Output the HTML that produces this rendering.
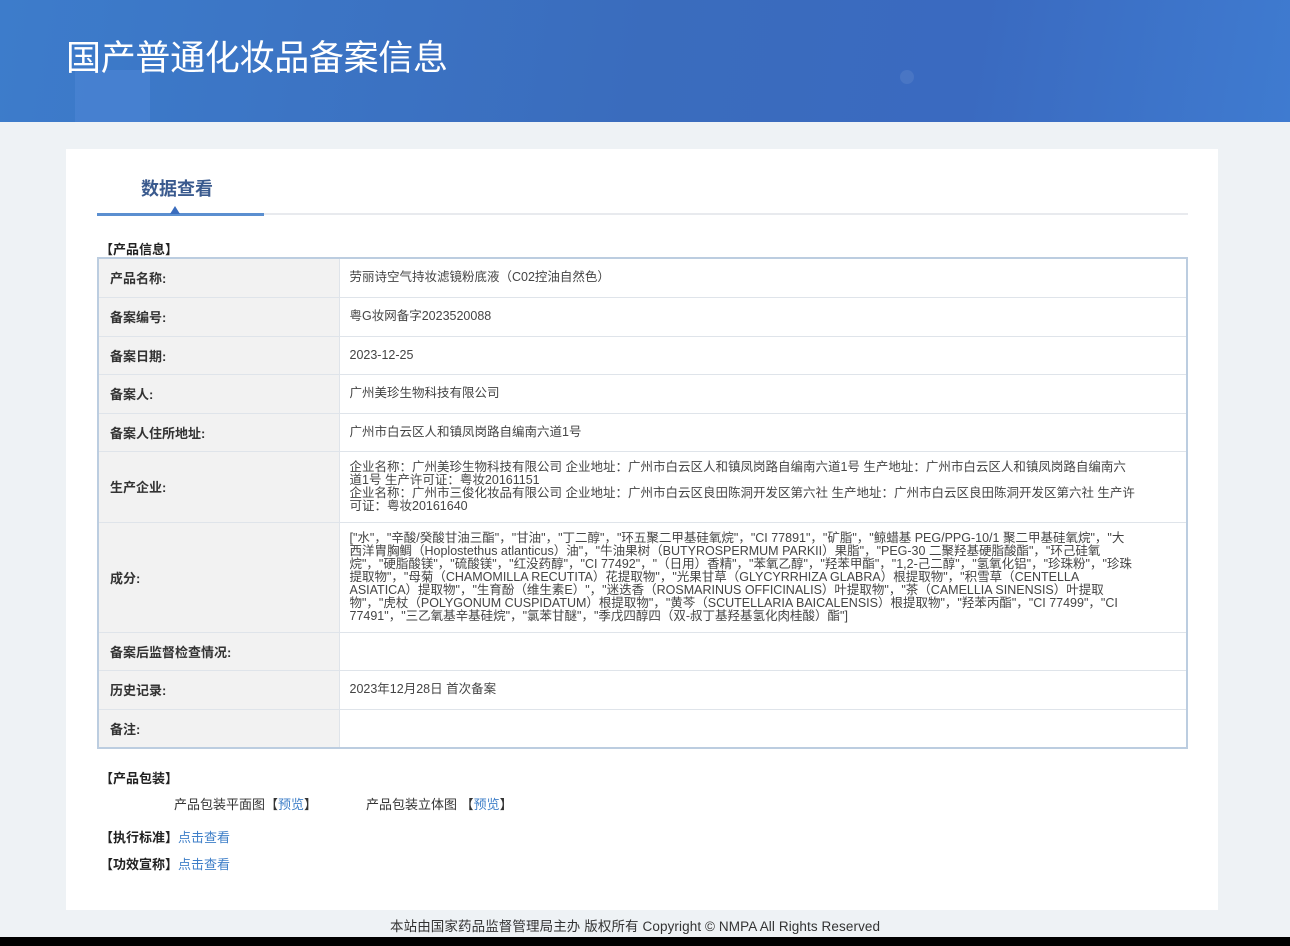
<!DOCTYPE html>
<html><head><meta charset="utf-8"><style>
*{margin:0;padding:0;box-sizing:border-box}
body{width:1290px;height:946px;overflow:hidden;background:#eef2f5;font-family:"Liberation Sans","Noto Sans CJK SC",sans-serif;color:#333;position:relative}
.hd{position:absolute;left:0;top:0;width:1290px;height:122px;background:linear-gradient(100deg,#3d7ccb 0%,#3a6cbd 50%,#3a6ac0 75%,#3f7bd0 100%);overflow:hidden}
.hd h1{position:absolute;left:66px;top:30px;font-size:35px;color:#fff;font-weight:normal;letter-spacing:-0.3px;font-family:"Noto Sans CJK SC",sans-serif}
.card{position:absolute;left:66px;top:149px;width:1152px;height:761px;background:#fff}
.tab{position:absolute;left:75px;top:26px;font-size:18px;font-weight:bold;color:#3a5a8e}
.line{position:absolute;left:31px;top:64px;width:1091px;height:2px;background:#e8eaee}
.act{position:absolute;left:31px;top:64px;width:167px;height:3px;background:#5b8fd0}
.tri{position:absolute;left:104px;top:57px;width:0;height:0;border-left:5px solid transparent;border-right:5px solid transparent;border-bottom:8px solid #3a6cbd}
.sec{position:absolute;font-size:13px;font-weight:bold;color:#222}
table{position:absolute;left:31px;top:108px;width:1091px;border-collapse:collapse;border:2px solid #bccde0}
td{border:1px solid #dfe4ea;font-size:12.5px;vertical-align:middle}
td.l{width:241px;background:#f2f2f2;font-weight:bold;font-size:13px;padding-left:11px;color:#333}
td.v{padding-left:10px;padding-right:50px;line-height:13px;color:#444}
.a{color:#3f7fc8}
.ft{position:absolute;top:915px;left:390px;font-size:13.5px;color:#333;letter-spacing:0.1px}
.blk{position:absolute;left:0;top:937px;width:1290px;height:9px;background:#000}
</style></head><body>
<div class="hd">
<div style="position:absolute;left:75px;top:70px;width:75px;height:60px;background:rgba(100,150,230,.25)"></div>
<div style="position:absolute;left:900px;top:70px;width:14px;height:14px;border-radius:50%;background:rgba(255,255,255,.08)"></div>
<h1>国产普通化妆品备案信息</h1></div>
<div class="card">
<div class="tab">数据查看</div>
<div class="line"></div><div class="act"></div><div class="tri"></div>
<div class="sec" style="left:34px;top:90px">【产品信息】</div>
<table>
<tr style="height:39px"><td class="l">产品名称:</td><td class="v">劳丽诗空气持妆滤镜粉底液（C02控油自然色）</td></tr>
<tr style="height:39px"><td class="l">备案编号:</td><td class="v">粤G妆网备字2023520088</td></tr>
<tr style="height:38px"><td class="l">备案日期:</td><td class="v">2023-12-25</td></tr>
<tr style="height:39px"><td class="l">备案人:</td><td class="v">广州美珍生物科技有限公司</td></tr>
<tr style="height:38px"><td class="l">备案人住所地址:</td><td class="v">广州市白云区人和镇凤岗路自编南六道1号</td></tr>
<tr style="height:71px"><td class="l">生产企业:</td><td class="v">企业名称：广州美珍生物科技有限公司 企业地址：广州市白云区人和镇凤岗路自编南六道1号 生产地址：广州市白云区人和镇凤岗路自编南六道1号 生产许可证：粤妆20161151<br>企业名称：广州市三俊化妆品有限公司 企业地址：广州市白云区良田陈洞开发区第六社 生产地址：广州市白云区良田陈洞开发区第六社 生产许可证：粤妆20161640</td></tr>
<tr style="height:110px"><td class="l">成分:</td><td class="v">["水"，"辛酸/癸酸甘油三酯"，"甘油"，"丁二醇"，"环五聚二甲基硅氧烷"，"CI 77891"，"矿脂"，"鲸蜡基 PEG/PPG-10/1 聚二甲基硅氧烷"，"大西洋胄胸鲷（Hoplostethus atlanticus）油"，"牛油果树（BUTYROSPERMUM PARKII）果脂"，"PEG-30 二聚羟基硬脂酸酯"，"环己硅氧烷"，"硬脂酸镁"，"硫酸镁"，"红没药醇"，"CI 77492"，"（日用）香精"，"苯氧乙醇"，"羟苯甲酯"，"1,2-己二醇"，"氢氧化铝"，"珍珠粉"，"珍珠提取物"，"母菊（CHAMOMILLA RECUTITA）花提取物"，"光果甘草（GLYCYRRHIZA GLABRA）根提取物"，"积雪草（CENTELLA ASIATICA）提取物"，"生育酚（维生素E）"，"迷迭香（ROSMARINUS OFFICINALIS）叶提取物"，"茶（CAMELLIA SINENSIS）叶提取物"，"虎杖（POLYGONUM CUSPIDATUM）根提取物"，"黄芩（SCUTELLARIA BAICALENSIS）根提取物"，"羟苯丙酯"，"CI 77499"，"CI 77491"，"三乙氧基辛基硅烷"，"氯苯甘醚"，"季戊四醇四（双-叔丁基羟基氢化肉桂酸）酯"]</td></tr>
<tr style="height:38px"><td class="l">备案后监督检查情况:</td><td class="v"></td></tr>
<tr style="height:39px"><td class="l">历史记录:</td><td class="v">2023年12月28日 首次备案</td></tr>
<tr style="height:39px"><td class="l">备注:</td><td class="v"></td></tr>
</table>
<div class="sec" style="left:34px;top:619px">【产品包装】</div>
<div style="position:absolute;left:108px;top:645px;font-size:13px">产品包装平面图【<span class="a">预览</span>】</div>
<div style="position:absolute;left:300px;top:645px;font-size:13px">产品包装立体图 【<span class="a">预览</span>】</div>
<div class="sec" style="left:34px;top:678px">【执行标准】<span class="a" style="font-weight:normal">点击查看</span></div>
<div class="sec" style="left:34px;top:705px">【功效宣称】<span class="a" style="font-weight:normal">点击查看</span></div>
</div>
<div class="ft">本站由国家药品监督管理局主办 版权所有 Copyright © NMPA All Rights Reserved</div>
<div class="blk"></div>
</body></html>
